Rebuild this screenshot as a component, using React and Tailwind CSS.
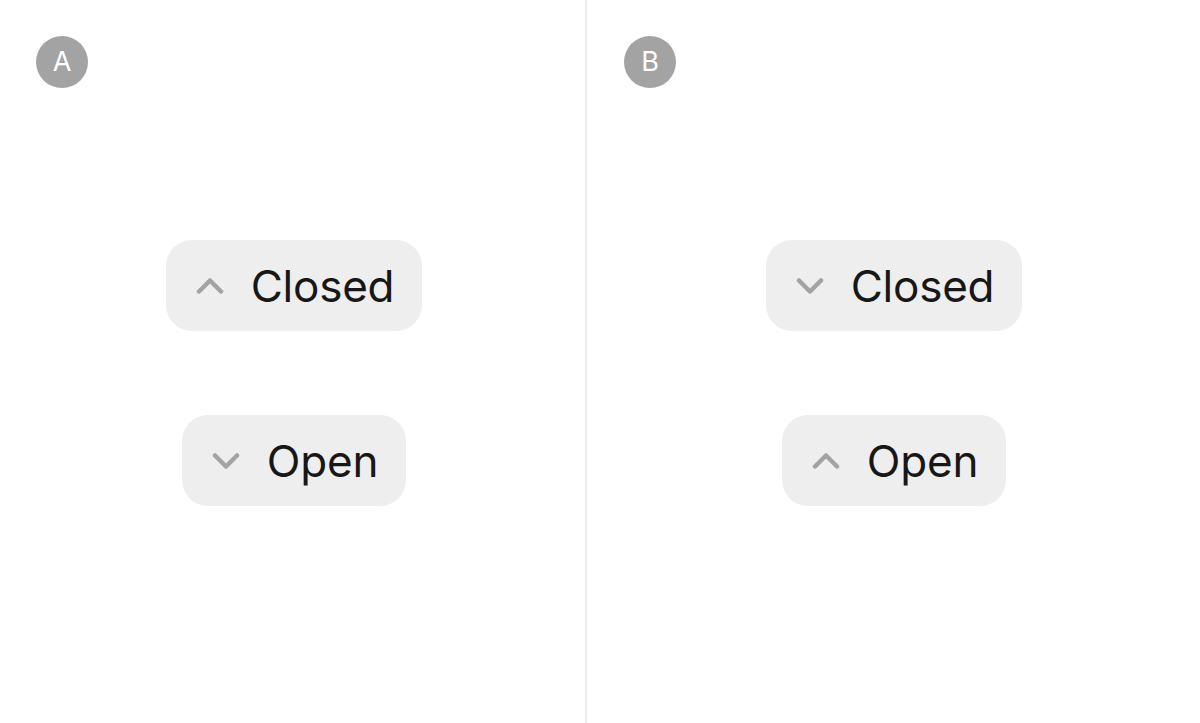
import React from 'react';

function Chevron({ up }) {
  return (
    <svg width="28" height="16" viewBox="0 0 28 16" fill="none" aria-hidden="true">
      <polyline
        points={up ? '3,13.5 14,2.5 25,13.5' : '3,2.5 14,13.5 25,2.5'}
        stroke="#a3a3a3"
        strokeWidth="4.5"
        strokeLinecap="round"
        strokeLinejoin="round"
      />
    </svg>
  );
}

function Pill({ label, up }) {
  return (
    <button className="flex items-center h-[91px] pl-[30px] pr-[28px] gap-[27px] rounded-[26px] bg-[#eeeeee]">
      <Chevron up={up} />
      <span className="text-[44px] leading-none text-[#171717] tracking-[-0.005em]">{label}</span>
    </button>
  );
}

function Panel({ letter, closedUp, className }) {
  return (
    <div className={`flex flex-col py-9 ${className}`}>
      <div className="w-[52px] h-[52px] rounded-full bg-[#a3a3a3] flex items-center justify-center text-white text-[27px] font-normal">
        {letter}
      </div>
      <div className="mt-[152px] flex flex-col items-center gap-[84px]">
        <Pill label="Closed" up={closedUp} />
        <Pill label="Open" up={!closedUp} />
      </div>
    </div>
  );
}

export default function App() {
  return (
    <div className="flex w-[1200px] h-[723px] bg-white" style={{ fontFamily: 'Inter, "Noto Sans", sans-serif' }}>
      <Panel letter="A" closedUp={true} className="w-[585px] shrink-0 pl-9 pr-[33px]" />
      <div className="w-[2px] shrink-0 bg-[#eeeeee]" />
      <Panel letter="B" closedUp={false} className="flex-1 pl-[37px] pr-9" />
    </div>
  );
}
